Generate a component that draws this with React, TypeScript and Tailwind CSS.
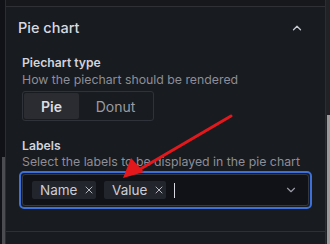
import { ChevronDown, ChevronUp, X } from "lucide-react";

export default function App() {
  return (
    <div
      className="flex h-[244px] w-[330px] overflow-hidden bg-[#181b1f] text-[#ccccdc]"
      style={{ fontFamily: "Inter, 'Noto Sans', sans-serif" }}
    >
      {/* left scroller */}
      <div className="relative w-[6px] shrink-0 border-r border-[#2a2d33] bg-[#111217]">
        <div className="absolute left-[2px] top-[157px] h-[90px] w-[3px] bg-[#4a4c52]" />
      </div>

      <div className="flex min-w-0 flex-1 flex-col">
        {/* top strip */}
        <div className="h-[7px] shrink-0 border-b border-[#2e3036] bg-[#17181b]" />

        {/* section header */}
        <div className="flex h-[42px] items-center justify-between pl-[12px] pr-[21px]">
          <span className="text-[14.5px] font-medium leading-none text-[#d8d9e0]">Pie chart</span>
          <ChevronUp size={14} strokeWidth={2.2} className="text-[#c8c9d2]" />
        </div>

        <div className="flex flex-col pl-[16px] pr-[13px]">
          <div className="mt-[6px] text-[12.2px] font-semibold leading-[16px] text-[#d2d3db]">Piechart type</div>
          <div className="mt-[1px] text-[12.3px] leading-[16px] text-[#8d8e97]">How the piechart should be rendered</div>
          <div className="mt-[3px] flex h-[30px] w-[132px] items-center rounded-[3px] border border-[#2f3238] p-px">
            <div className="flex h-full w-[55px] items-center justify-center rounded-[2px] bg-[#2a2c31] text-[14px] font-semibold text-[#dcdde3]">
              Pie
            </div>
            <div className="flex h-full flex-1 items-center justify-center text-[14px] text-[#9a9ba4]">Donut</div>
          </div>

          <div className="mt-[17px] text-[12.2px] font-semibold leading-[16px] text-[#d2d3db]">Labels</div>
          <div className="mt-0 text-[12.3px] leading-[16px] text-[#8d8e97] whitespace-nowrap">
            Select the labels to be displayed in the pie chart
          </div>
          <div className="ml-[-3px] mt-[1px] w-[293px] rounded-[5px] border-2 border-[#3d71d9] p-px">
            <div className="flex h-[32px] items-center gap-[8px] rounded-[3px] border border-[#34373d] bg-[#111217] pl-[9px] pr-[10px]">
              <div className="flex h-[18px] w-[64px] items-center gap-[6px] rounded-[2px] bg-[#22252b] pl-[8px] text-[13.5px] text-[#cdced6]">
                Name
                <X size={12} strokeWidth={2} className="text-[#b5b6bf]" />
              </div>
              <div className="flex h-[18px] w-[62px] items-center gap-[6px] rounded-[2px] bg-[#22252b] pl-[8px] text-[13.5px] text-[#cdced6]">
                Value
                <X size={12} strokeWidth={2} className="text-[#b5b6bf]" />
              </div>
              <div className="h-[15px] w-px bg-[#d8d9e0]" />
              <div className="flex-1" />
              <ChevronDown size={14} strokeWidth={2} className="text-[#9a9ba4]" />
            </div>
          </div>
        </div>

        <div className="mt-auto mb-[12px] border-b border-[#2e3036]" />
      </div>

      {/* right scroller */}
      <div className="relative w-[5px] shrink-0 border-l border-[#2a2d33] bg-[#202226]">
        <div className="absolute left-[1px] top-[115px] h-[130px] w-[3px] bg-[#9b9b9b]" />
      </div>

      {/* red arrow annotation */}
      <svg className="pointer-events-none absolute left-0 top-0" width="330" height="244">
        <line x1="231" y1="116" x2="137" y2="171" stroke="#e3181c" strokeWidth="3" strokeLinecap="round" />
        <polygon points="123,178 131,158 144,172" fill="#e3181c" />
      </svg>
    </div>
  );
}
